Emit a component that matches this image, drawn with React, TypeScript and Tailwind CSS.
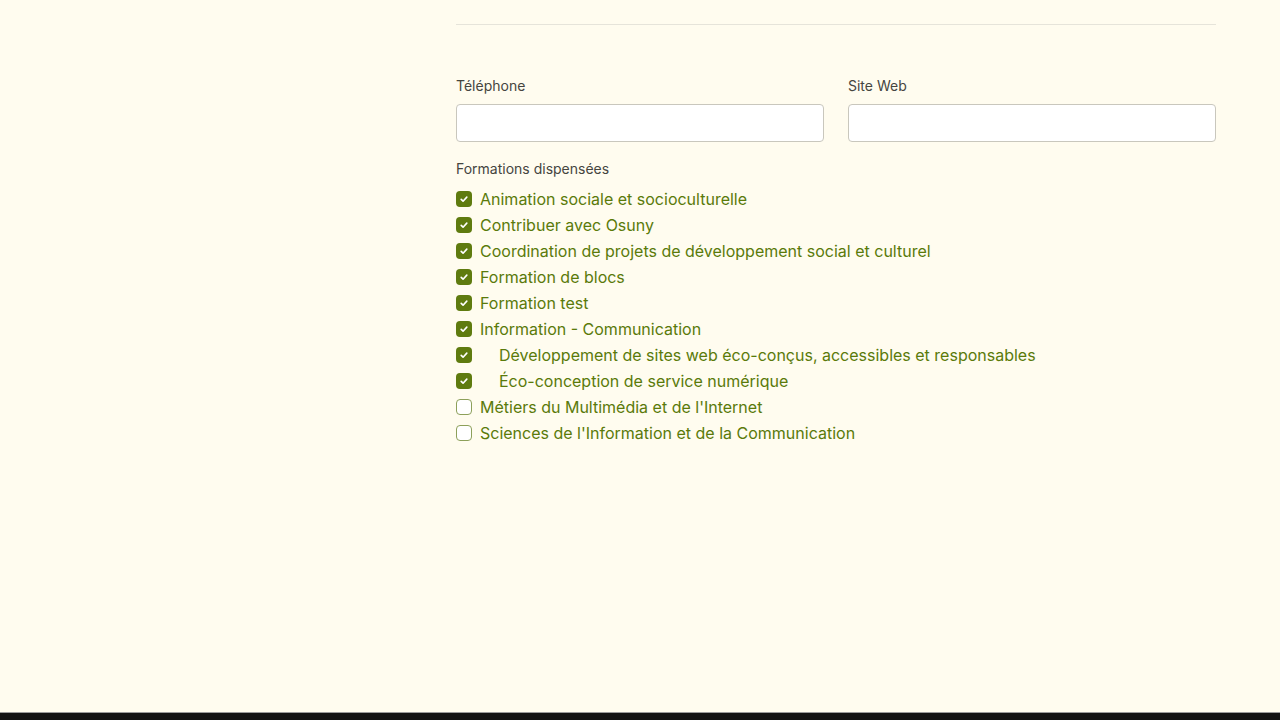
const formations = [
  { label: 'Animation sociale et socioculturelle', checked: true },
  { label: 'Contribuer avec Osuny', checked: true },
  { label: 'Coordination de projets de développement social et culturel', checked: true },
  { label: 'Formation de blocs', checked: true },
  { label: 'Formation test', checked: true },
  { label: 'Information - Communication', checked: true },
  { label: 'Développement de sites web éco-conçus, accessibles et responsables', checked: true, child: true },
  { label: 'Éco-conception de service numérique', checked: true, child: true },
  { label: "Métiers du Multimédia et de l'Internet", checked: false },
  { label: "Sciences de l'Information et de la Communication", checked: false },
]

function Box({ checked }: { checked: boolean }) {
  if (!checked) {
    return <span className="h-4 w-4 shrink-0 rounded-[4px] border border-[#8da05a] bg-white" />
  }
  return (
    <span className="flex h-4 w-4 shrink-0 items-center justify-center rounded-[4px] bg-[#5f7b0f]">
      <svg viewBox="0 0 16 16" className="h-[10px] w-[10px]" fill="none" stroke="white" strokeWidth="2.6" strokeLinecap="round" strokeLinejoin="round">
        <path d="M3.5 8.5l3 3 6-6.5" />
      </svg>
    </span>
  )
}

export default function App() {
  return (
    <div className="flex min-h-[720px] flex-col bg-[#fffcef] font-['Inter',sans-serif]">
      <div className="flex-1 pl-[456px] pr-[64px] pt-[24px]">
        <div className="h-px bg-[#e6e4da]" />

        <div className="mt-[51px] grid grid-cols-2 gap-6">
          <div>
            <label className="block text-[14px] leading-5 text-[#45453f]">Téléphone</label>
            <input className="mt-[8px] block h-[38px] w-full rounded-[4px] border border-[#c9c7bd] bg-white px-3" />
          </div>
          <div>
            <label className="block text-[14px] leading-5 text-[#45453f]">Site Web</label>
            <input className="mt-[8px] block h-[38px] w-full rounded-[4px] border border-[#c9c7bd] bg-white px-3" />
          </div>
        </div>

        <p className="mt-[17px] text-[14px] leading-5 text-[#45453f]">Formations dispensées</p>
        <ul className="mt-[7px]">
          {formations.map((f) => (
            <li key={f.label} className="flex h-[26px] items-center gap-2 text-[16px] text-[#5a7a0a]">
              <Box checked={f.checked} />
              <span className={f.child ? 'pl-[19px]' : ''}>{f.label}</span>
            </li>
          ))}
        </ul>
      </div>
      <div className="h-[8px] border-t border-[#9a9a9a] bg-[#121212]" />
    </div>
  )
}
